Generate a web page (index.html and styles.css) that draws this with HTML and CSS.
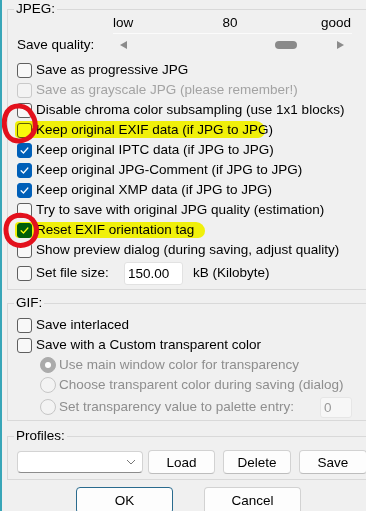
FILE: index.html
```html
<!DOCTYPE html>
<html lang="en">
<head>
  <meta charset="UTF-8" />
  <meta name="viewport" content="width=device-width, initial-scale=1" />
  <title>JPEG / GIF save options</title>
  <link rel="stylesheet" href="styles.css">
</head>
<body>
  <fieldset class="group jpeg">
    <legend>JPEG:</legend>

    <div class="scale">
      <span>low</span><span class="mid">80</span><span>good</span>
    </div>
    <div class="quality">
      <span class="caption">Save quality:</span>
      <div class="slider">
        <span class="arrow left"></span>
        <div class="track"><span class="thumb" style="margin-left: 80%"></span></div>
        <span class="arrow right"></span>
      </div>
    </div>

    <div class="options">
      <label class="check"><span class="box"></span>Save as progressive JPG</label>
      <label class="check disabled"><span class="box"></span>Save as grayscale JPG (please remember!)</label>
      <label class="check"><span class="box"></span>Disable chroma color subsampling (use 1x1 blocks)</label>
      <label class="check"><span class="marker wide"></span><span class="box"></span>Keep original EXIF data (if JPG to JPG)</label>
      <label class="check"><span class="box on"><svg viewBox="0 0 15 15"><path d="M3.6 7.8 L6.3 10.4 L11.4 4.6" /></svg></span>Keep original IPTC data (if JPG to JPG)</label>
      <label class="check"><span class="box on"><svg viewBox="0 0 15 15"><path d="M3.6 7.8 L6.3 10.4 L11.4 4.6" /></svg></span>Keep original JPG-Comment (if JPG to JPG)</label>
      <label class="check"><span class="box on"><svg viewBox="0 0 15 15"><path d="M3.6 7.8 L6.3 10.4 L11.4 4.6" /></svg></span>Keep original XMP data (if JPG to JPG)</label>
      <label class="check"><span class="box"></span>Try to save with original JPG quality (estimation)</label>
      <label class="check"><span class="marker short"></span><span class="box on"><svg viewBox="0 0 15 15"><path d="M3.6 7.8 L6.3 10.4 L11.4 4.6" /></svg></span>Reset EXIF orientation tag</label>
      <label class="check"><span class="box"></span>Show preview dialog (during saving, adjust quality)</label>
      <div class="check tall">
        <span class="box"></span>
        <span class="field-label">Set file size:</span>
        <input class="edit size" type="text" value="150.00">
        <span>kB (Kilobyte)</span>
      </div>
    </div>
  </fieldset>

  <fieldset class="group gif">
    <legend>GIF:</legend>
    <label class="check"><span class="box"></span>Save interlaced</label>
    <label class="check"><span class="box"></span>Save with a Custom transparent color</label>
    <label class="radio disabled"><span class="dot on"></span>Use main window color for transparency</label>
    <label class="radio disabled"><span class="dot"></span>Choose transparent color during saving (dialog)</label>
    <div class="radio disabled tall">
      <span class="dot"></span>
      <span class="field-label palette">Set transparency value to palette entry:</span>
      <input class="edit entry" type="text" value="0" disabled>
    </div>
  </fieldset>

  <fieldset class="group profiles">
    <legend>Profiles:</legend>
    <div class="profile-row">
      <div class="combo">
        <svg viewBox="0 0 10 6"><path d="M1 1 L5 5 L9 1" /></svg>
      </div>
      <button class="btn">Load</button>
      <button class="btn">Delete</button>
      <button class="btn">Save</button>
    </div>
  </fieldset>

  <div class="actions">
    <button class="btn main default">OK</button>
    <button class="btn main">Cancel</button>
  </div>

  <!-- red marks drawn over the dialog -->
  <svg class="ink" viewBox="0 0 366 511" width="366" height="511">
    <path d="M31 113 C27 105 13 103 7 112 C2 121 4 136 13 140 C23 143 33 138 35 128 C36 122 34 117 31 113" />
    <path d="M34 222 C30 214 15 213 9 220 C4 227 5 240 14 244 C23 248 34 243 36 234 C37 229 36 225 34 222" />
  </svg>
</body>
</html>
```

FILE: styles.css
```css
:root {
  --bg: #f0f0f0;
  --text: #000000;
  --muted: #a3a3a3;
  --line: #d9d9d9;
  --accent: #005fb8;
  --font-family: 'Liberation Sans', Arial, sans-serif;
}

* { box-sizing: border-box; }

html, body {
  height: 100%;
}

body {
  margin: 0;
  background-color: var(--bg);
  color: var(--text);
  font-family: var(--font-family);
  font-size: 13.5px;
  line-height: 20px;
  border-left: 2px solid #38a6b8;
  overflow: hidden;
  position: relative;
}

/* group boxes */
.group {
  width: 362px;
  margin: 0 0 0 5px;
  padding: 0 0 0 9px;
  border: 1px solid var(--line);
}

.group legend {
  line-height: 16px;
  padding: 0 2px;
  margin-left: -3px;
}

.jpeg {
  margin-top: 1px;
  padding-bottom: 3px;
}

.gif {
  margin-top: 5px;
  padding-top: 4px;
  padding-bottom: 1px;
}

.profiles {
  margin-top: 7px;
  padding-top: 6px;
  padding-bottom: 5px;
}

/* quality slider */
.scale {
  display: flex;
  justify-content: space-between;
  width: 239px;
  margin: -4px 0 0 96px;
  padding-right: 1px;
  border-bottom: 1px solid #fbfbfb;
}

.scale .mid {
  margin-left: 6px;
}

.quality {
  display: flex;
  align-items: center;
  margin-top: 1px;
}

.caption {
  width: 96px;
}

.slider {
  display: flex;
  align-items: center;
  gap: 4px;
  width: 239px;
  padding: 0 8px 0 7px;
}

.arrow {
  width: 0;
  height: 0;
  border-top: 4px solid transparent;
  border-bottom: 4px solid transparent;
}

.arrow.left { border-right: 7px solid #8b8b8b; }
.arrow.right { border-left: 7px solid #8b8b8b; }

.track {
  flex: 1;
  padding-right: 22px;
  display: flex;
}

.thumb {
  width: 22px;
  height: 8px;
  border-radius: 4px;
  background-color: #8a8a8a;
  flex-shrink: 0;
}

.options {
  margin-top: 5px;
}

/* checkboxes and radios */
.check, .radio {
  display: flex;
  align-items: center;
  height: 20px;
  white-space: nowrap;
  position: relative;
}

.check .box {
  width: 15px;
  height: 15px;
  margin-right: 4px;
  border: 1px solid #5f5f5f;
  border-radius: 3px;
  background-color: #f8f8f8;
  flex-shrink: 0;
  display: flex;
}

.check .box.on {
  background-color: var(--accent);
  border-color: var(--accent);
}

.box svg {
  width: 13px;
  height: 13px;
  fill: none;
  stroke: #ffffff;
  stroke-width: 1.4;
  stroke-linecap: round;
  stroke-linejoin: round;
}

.check.disabled {
  color: var(--muted);
}

.check.disabled .box {
  border-color: #c9c9c9;
  background-color: #f3f3f3;
}

.tall {
  height: 26px;
}

.gif .tall {
  height: 24px;
}

.field-label {
  min-width: 88px;
}

.field-label.palette {
  min-width: 261px;
}

.radio {
  padding-left: 23px;
}

.radio.disabled {
  color: #8e8e8e;
}

.dot {
  width: 16px;
  height: 16px;
  margin-right: 3px;
  border: 1px solid #c6c6c6;
  border-radius: 50%;
  background-color: #f3f3f3;
  flex-shrink: 0;
  display: flex;
  align-items: center;
  justify-content: center;
}

.dot.on {
  background-color: #ababab;
  border-color: #ababab;
}

.dot.on::after {
  content: "";
  width: 6px;
  height: 6px;
  border-radius: 50%;
  background-color: #ffffff;
}

/* text fields */
.edit {
  font-family: var(--font-family);
  font-size: 13.5px;
  height: 23px;
  padding: 0 3px;
  border: 1px solid #e2e2e2;
  border-radius: 3px;
  background-color: #ffffff;
  color: var(--text);
  outline: none;
}

.edit.size {
  width: 59px;
  margin-right: 10px;
}

.edit.entry {
  width: 32px;
  height: 21px;
  background-color: #f7f7f7;
  border-color: #e6e6e6;
  color: #9a9a9a;
}

/* highlighter marks */
.marker {
  position: absolute;
  left: -2px;
  top: 1px;
  height: 17px;
  background-color: #ffff0a;
  mix-blend-mode: multiply;
  border-radius: 4px 9px 7px 4px;
  pointer-events: none;
}

.marker.wide { width: 250px; }
.marker.short { width: 190px; top: 2px; height: 16px; }

/* profiles */
.profile-row {
  display: flex;
  align-items: center;
  gap: 8px;
  height: 24px;
}

.combo {
  width: 126px;
  height: 22px;
  margin-right: -3px;
  border: 1px solid #d3d3d3;
  border-bottom-color: #8c8c8c;
  border-radius: 4px;
  background-color: #ffffff;
  display: flex;
  align-items: center;
  justify-content: flex-end;
  padding-right: 6px;
}

.combo svg {
  width: 10px;
  height: 6px;
  fill: none;
  stroke: #777777;
  stroke-width: 1;
}

.btn {
  font-family: var(--font-family);
  font-size: 13.5px;
  color: var(--text);
  width: 68px;
  height: 24px;
  padding: 0;
  border: 1px solid #d2d2d2;
  border-bottom-color: #bdbdbd;
  border-radius: 4px;
  background-color: #fdfdfd;
  flex-shrink: 0;
}

.profile-row .btn:first-of-type {
  width: 67px;
}

.actions {
  display: flex;
  gap: 31px;
  margin: 7px 0 0 74px;
}

.btn.main {
  width: 97px;
  height: 27px;
}

.btn.default {
  border-color: #2a6b8e;
}

/* red circles on top of everything */
.ink {
  position: absolute;
  left: -2px;
  top: 0;
  pointer-events: none;
}

.ink path {
  fill: none;
  stroke: #e3101c;
  stroke-width: 5;
  stroke-linecap: round;
}
```
